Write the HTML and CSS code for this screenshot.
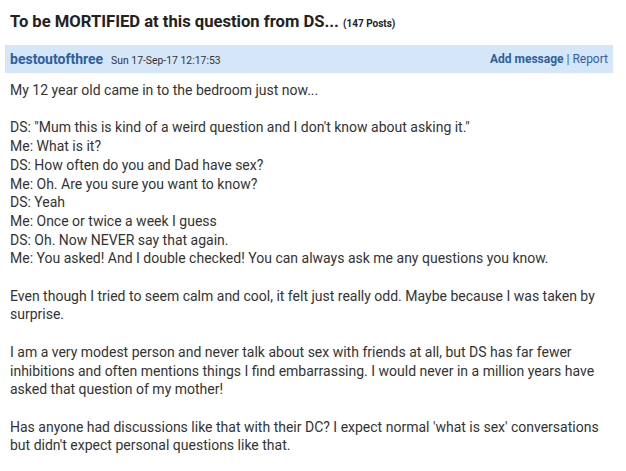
FILE: index.html
```html
<!DOCTYPE html>
<html>
<head>
<meta charset="utf-8">
<link rel="stylesheet" href="styles.css">
</head>
<body>
<div class="thread">
  <h1 class="title">To be MORTIFIED at this question from DS... <span class="count">(147 Posts)</span></h1>
  <div class="post-bar">
    <div class="who">
      <span class="author">bestoutofthree</span>
      <span class="date">Sun 17-Sep-17 12:17:53</span>
    </div>
    <div class="actions">
      <span class="add">Add message</span> | <span class="report">Report</span>
    </div>
  </div>
  <div class="post-body">
    My 12 year old came in to the bedroom just now...<br><br>
    DS: "Mum this is kind of a weird question and I don't know about asking it."<br>
    Me: What is it?<br>
    DS: How often do you and Dad have sex?<br>
    Me: Oh. Are you sure you want to know?<br>
    DS: Yeah<br>
    Me: Once or twice a week I guess<br>
    DS: Oh. Now NEVER say that again.<br>
    Me: You asked! And I double checked! You can always ask me any questions you know.<br><br>
    Even though I tried to seem calm and cool, it felt just really odd. Maybe because I was taken by surprise.<br><br>
    I am a very modest person and never talk about sex with friends at all, but DS has far fewer inhibitions and often mentions things I find embarrassing. I would never in a million years have asked that question of my mother!<br><br>
    Has anyone had discussions like that with their DC? I expect normal 'what is sex' conversations but didn't expect personal questions like that.
  </div>
</div>
</body>
</html>
```
FILE: styles.css
```css
html, body {
  margin: 0;
  padding: 0;
  background: #ffffff;
}
body {
  font-family: Roboto, "Liberation Sans", Arial, sans-serif;
  color: #333333;
}
.thread {
  width: 608px;
  padding: 0 0 0 5px;
}
.title {
  margin: 0;
  padding: 12px 0 0 5px;
  height: 33px;
  box-sizing: border-box;
  font-size: 16.6px;
  line-height: 20px;
  font-weight: 700;
  color: #222222;
}
.count {
  font-size: 10px;
  font-weight: 700;
}
.post-bar {
  height: 28px;
  background: #d5e6f9;
  display: flex;
  align-items: center;
  justify-content: space-between;
  padding: 0 5px;
  margin-top: 12px;
}
.who {
  display: flex;
  align-items: baseline;
  gap: 8px;
}
.author {
  font-size: 14px;
  font-weight: 700;
  color: #2e5f9e;
}
.date {
  font-size: 10.4px;
  color: #333333;
}
.actions {
  font-size: 12px;
  color: #2e5f9e;
}
.add {
  font-weight: 700;
}
.post-body {
  padding: 8px 5px 0 5px;
  font-size: 14px;
  line-height: 18.7px;
  color: #333333;
}
```
